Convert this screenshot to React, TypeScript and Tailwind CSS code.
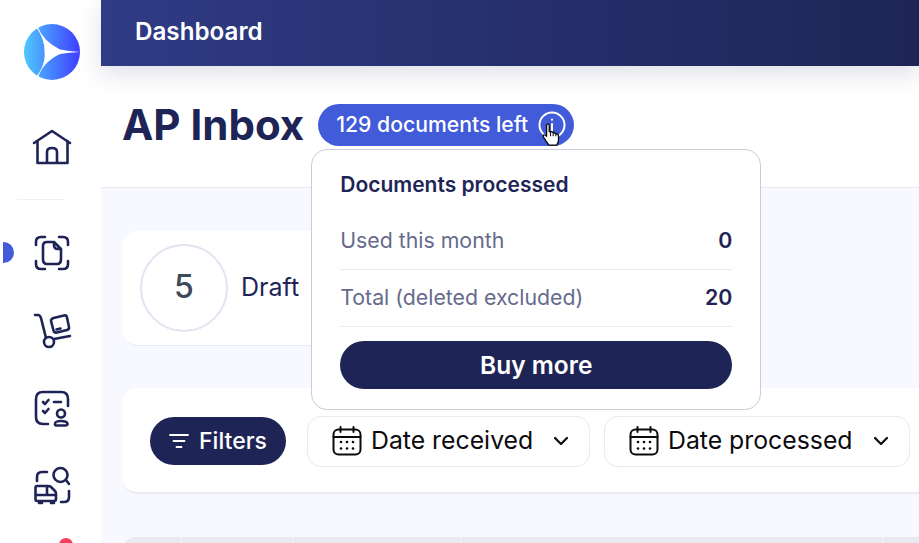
import { ChevronDown } from "lucide-react"

function Logo() {
  return (
    <svg width="56" height="56" viewBox="24 24 56 56">
      <defs>
        <linearGradient id="logo" x1="0" x2="1" y1="0" y2="0">
          <stop offset="0" stopColor="#4fc8ff" />
          <stop offset="1" stopColor="#3f3cff" />
        </linearGradient>
      </defs>
      <circle cx="52" cy="52" r="28" fill="url(#logo)" />
      <path
        d="M37.5 26.5Q43 41 60 49.5Q69 51.5 80.5 52Q69 52.5 60 54Q43 62 38 77.5L36.5 76.5Q46 64 44.5 52Q45 40 36.5 27.5Z"
        fill="#fff"
      />
    </svg>
  )
}

function NavIcon({ box, children }: { box: string; children: React.ReactNode }) {
  const [, , w, h] = box.split(" ")
  return (
    <svg
      width={w}
      height={h}
      viewBox={box}
      fill="none"
      stroke="#1e2556"
      strokeWidth="2.6"
      strokeLinecap="round"
      strokeLinejoin="round"
    >
      {children}
    </svg>
  )
}

function CalendarIcon() {
  return (
    <svg width="30" height="30" viewBox="0 0 30 30" fill="none" stroke="#0b0b0f" strokeWidth="2" strokeLinecap="round">
      <rect x="1.5" y="3.5" width="27" height="25" rx="5" />
      <path d="M1.5 11h27M8.5 1v5M21.5 1v5" />
      <g fill="#0b0b0f" stroke="none">
        <circle cx="9" cy="16" r="1.3" />
        <circle cx="15" cy="16" r="1.3" />
        <circle cx="21" cy="16" r="1.3" />
        <circle cx="9" cy="22.5" r="1.3" />
        <circle cx="15" cy="22.5" r="1.3" />
        <circle cx="21" cy="22.5" r="1.3" />
      </g>
    </svg>
  )
}

function DateFilter({ label, width }: { label: string; width: string }) {
  return (
    <div className={`flex h-[51px] shrink-0 items-center rounded-[14px] border border-[#e8e9f1] bg-white pl-[24px] ${width}`}>
      <CalendarIcon />
      <span className="ml-[9px] text-[24.8px] text-[#0b0b0f]">{label}</span>
      <ChevronDown className="ml-auto mr-[16px] text-[#0b0b0f]" size={24} strokeWidth={2.2} />
    </div>
  )
}

function Row({ label, value }: { label: string; value: string }) {
  return (
    <div className="flex h-[57px] items-center justify-between border-b border-[#e9eaf0] text-[21.3px]">
      <span className="text-[#666b8c]">{label}</span>
      <span className="font-semibold text-[#1e2556]">{value}</span>
    </div>
  )
}

export default function App() {
  return (
    <div className="flex h-[543px] w-[919px] overflow-hidden bg-white font-['Inter',sans-serif]">
      <aside className="relative z-10 flex w-[101px] shrink-0 flex-col items-center bg-white pl-[3px]">
        <div className="mt-[24px]">
          <Logo />
        </div>
        <div className="mt-[49px]">
          <NavIcon box="32 129 40 36">
            <path d="M34 143L52 131L70 143M37.5 141V163H67.5V141M47 163V152Q47 148 52 148Q57 148 57 152V163" />
          </NavIcon>
        </div>
        <div className="mt-[34px] ml-[14px] h-px w-[48px] self-start bg-[#f0f1f5]" />
        <div className="relative mt-[35px] flex w-full justify-center">
          <span className="absolute left-0 top-[7px] h-[21px] w-[11px] rounded-r-full bg-[#425bd9]" />
          <NavIcon box="33 235 38 36">
            <path d="M36 245V242Q36 237 41 237H45M59 237H63Q68 237 68 242V245M36 261V264Q36 269 41 269H45M59 269H63Q68 269 68 264V261" />
            <path d="M54 242H47Q43 242 43 246V259Q43 264 47 264H57Q61 264 61 259V249ZM54 242V245Q54 249 58 249H61" />
          </NavIcon>
        </div>
        <div className="mt-[42px]">
          <NavIcon box="32 312 39 37">
            <path d="M34 314H37Q39 314 40 317L45 337" />
            <circle cx="48" cy="341" r="5" />
            <path d="M53 338L69 335" />
            <path d="M52.5 317L63 314.5Q65.5 314 66 316.5L68 326Q68.5 328 66 329L56 331.5Q53 332 52.5 329.5L50 320Q50 318 52.5 317ZM55.5 328.5L59.5 327.5" />
          </NavIcon>
        </div>
        <div className="mt-[40px]">
          <NavIcon box="34 389 36 37">
            <path d="M68 405V398Q68 391 61 391H43Q36 391 36 398V416Q36 423 43 423H48" />
            <path d="M43 401L45 403L48.5 399M43 410L45 412L48.5 408M54 401H61" />
            <circle cx="61" cy="412.5" r="4" />
            <path d="M57 424.5H65Q68 424.5 67.5 422.5Q66.5 420 61 420Q55.5 420 55 422.5Q54.5 424.5 57 424.5Z" />
          </NavIcon>
        </div>
        <div className="mt-[39px]">
          <NavIcon box="32 464 38 39">
            <path d="M36 479V475Q36 470 41 470H46" />
            <circle cx="59.5" cy="473" r="7" />
            <path d="M65 478L68 482" />
            <path d="M68 489V495Q68 500 63 500H60" />
            <path d="M36 484H47Q49 484 50 485L54 489Q55 490 55 492V497Q55 499 53 499H36Q34.5 499 34.5 497V486Q34.5 484 36 484ZM34.5 493H55M46 484V493" />
            <path d="M38 501H41M50 501H53" />
          </NavIcon>
        </div>
        <span className="absolute left-[59px] top-[538px] h-[14px] w-[14px] rounded-full bg-[#f43f5e]" />
      </aside>

      <main className="flex min-w-0 flex-1 flex-col">
        <header className="relative z-10 flex h-[66px] shrink-0 items-center bg-gradient-to-r from-[#2f3b85] to-[#1e2556] pb-[2px] pl-[34px] shadow-[0_8px_24px_rgba(30,37,86,0.14)]">
          <span className="text-[24.2px] font-semibold text-white">Dashboard</span>
        </header>

        <section className="flex h-[122px] shrink-0 items-start border-b border-[#e6e7ef] bg-white pl-[21px] pt-[32px]">
          <h1 className="text-[42px] font-bold leading-[54px] text-[#1e2556]">AP Inbox</h1>
          <div className="relative ml-[14px] mt-[6px]">
            <div className="flex h-[42px] w-[256px] items-center rounded-full bg-[#425bd9] pl-[18px] text-[21.2px] font-medium text-white">
              129 documents left
              <svg className="ml-[10px]" width="28" height="28" viewBox="0 0 28 28" fill="none" stroke="#fff" strokeWidth="2" strokeLinecap="round">
                <circle cx="14" cy="14" r="12.5" />
                <path d="M14 13v7M14 8.5v.2" />
              </svg>
            </div>
            {/* hand cursor */}
            <svg className="absolute left-[224px] top-[19px] z-30" width="18" height="23" viewBox="0 0 20 26">
              <path
                d="M5 2.5Q5 1 6.5 1Q8 1 8 2.5V10L9.5 9.5Q11 9.5 11.5 10.5Q13.5 10 14 11.5Q16 11 16.5 12.5Q18.5 12.5 18.5 14.5V19Q18.5 22 16.5 25H7.5Q6 22 4 20L1.5 16Q0.5 14 2 13.5Q3.5 13 5 15Z"
                fill="#fff"
                stroke="#0b0b0f"
                strokeWidth="1.5"
                strokeLinejoin="round"
              />
              <path d="M9.5 10v5M12.5 11v4M15.5 12v3" stroke="#0b0b0f" strokeWidth="1.2" />
            </svg>
            <div className="absolute left-[-7px] top-[45px] z-20 h-[261px] w-[450px] rounded-[16px] border border-[#cbccd8] bg-white px-[28px] pt-[23px]">
              <div className="text-[21px] font-semibold leading-[24px] text-[#1e2556]">Documents processed</div>
              <div className="mt-[16px]">
                <Row label="Used this month" value="0" />
                <Row label="Total (deleted excluded)" value="20" />
              </div>
              <button className="mt-[14px] h-[48px] w-full rounded-full bg-[#1e2556] text-[24.5px] font-semibold text-white">
                Buy more
              </button>
            </div>
          </div>
        </section>

        <div className="flex min-h-0 flex-1 flex-col bg-[#f8f9fe] pl-[21px]">
          <div className="mt-[43px] flex h-[115px] w-[360px] shrink-0 items-center rounded-[16px] border-b border-[#e9eaf0] bg-white pl-[18px]">
            <div className="flex h-[88px] w-[88px] items-center justify-center rounded-full border-2 border-[#e1e5f1] pb-[2px] text-[32px] font-medium text-[#3d4a5c]">
              5
            </div>
            <span className="ml-[13px] text-[25px] text-[#1e2556]">Draft</span>
          </div>

          <div className="mt-[42px] flex h-[106px] w-[840px] shrink-0 items-center gap-[14px] rounded-[16px] border-b-2 border-[#eaebf1] bg-white pl-[28px] pt-[2px]">
            <div className="mr-[7px] flex h-[48px] w-[136px] shrink-0 items-center justify-center gap-[10px] rounded-full bg-[#1e2556] text-[23px] font-medium text-white">
              <svg width="20" height="16" viewBox="0 0 20 16" fill="none" stroke="#fff" strokeWidth="1.8" strokeLinecap="round">
                <path d="M1 2h18M4.5 8h11M7.5 14h5" />
              </svg>
              Filters
            </div>
            <DateFilter label="Date received" width="w-[283px]" />
            <DateFilter label="Date processed" width="w-[306px]" />
          </div>

          <div className="mt-[43px] flex h-[20px] w-[840px] shrink-0 rounded-t-[14px] bg-[#e9eaf0]">
            <div className="w-[60px] border-r border-[#f4f5f9]" />
            <div className="w-[111px] border-r border-[#f4f5f9]" />
            <div className="w-[168px] border-r border-[#f4f5f9]" />
            <div className="w-[422px] border-r border-[#f4f5f9]" />
          </div>
        </div>
      </main>
    </div>
  )
}
